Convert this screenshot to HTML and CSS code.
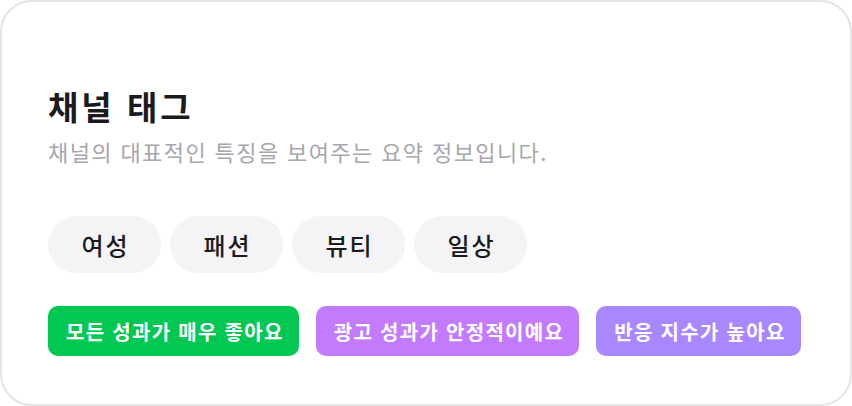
FILE: index.html
```html
<!DOCTYPE html>
<html lang="ko">
<head>
<meta charset="utf-8">
<link rel="stylesheet" href="styles.css">
</head>
<body>
<div class="card">
  <h1 class="title">채널 태그</h1>
  <p class="subtitle">채널의 대표적인 특징을 보여주는 요약 정보입니다.</p>
  <div class="chips">
    <span class="chip">여성</span>
    <span class="chip">패션</span>
    <span class="chip">뷰티</span>
    <span class="chip">일상</span>
  </div>
  <div class="badges">
    <span class="badge badge-green">모든 성과가 매우 좋아요</span>
    <span class="badge badge-purple">광고 성과가 안정적이예요</span>
    <span class="badge badge-violet">반응 지수가 높아요</span>
  </div>
</div>
</body>
</html>
```
FILE: styles.css
```css
html, body {
  margin: 0;
  padding: 0;
  background: #ffffff;
}
body {
  font-family: "Noto Sans CJK KR", "Noto Sans", sans-serif;
}
.card {
  box-sizing: border-box;
  width: 852px;
  height: 406px;
  border: 2px solid #e4e4e6;
  border-radius: 32px;
  padding: 82px 46px 0;
  background: #fff;
}
.title {
  margin: 0;
  font-size: 33px;
  line-height: 44px;
  font-weight: 700;
  color: #1b1b1d;
  letter-spacing: 3px;
}
.subtitle {
  margin: 8px 0 0;
  font-size: 22px;
  line-height: 30px;
  color: #a6a6ae;
  font-weight: 400;
  letter-spacing: 1.4px;
}
.chips {
  display: flex;
  gap: 9px;
  margin-top: 50px;
}
.chip {
  box-sizing: border-box;
  display: flex;
  align-items: center;
  justify-content: center;
  min-width: 113px;
  height: 57px;
  padding: 0 0 0 2px;
  border-radius: 29px;
  background: #f4f4f6;
  color: #1b1b1d;
  font-size: 24px;
  font-weight: 500;
  letter-spacing: 2px;
}
.badges {
  display: flex;
  gap: 17px;
  margin-top: 33px;
}
.badge {
  flex-shrink: 0;
  white-space: nowrap;
  display: flex;
  align-items: center;
  height: 50px;
  padding: 0 15px 0 18px;
  border-radius: 10px;
  color: #fff;
  font-size: 20px;
  font-weight: 700;
  letter-spacing: 1.3px;
}
.badge-green { background: #02c853; }
.badge-purple { background: #c27bfd; }
.badge-violet { background: #a887ff; }
```
